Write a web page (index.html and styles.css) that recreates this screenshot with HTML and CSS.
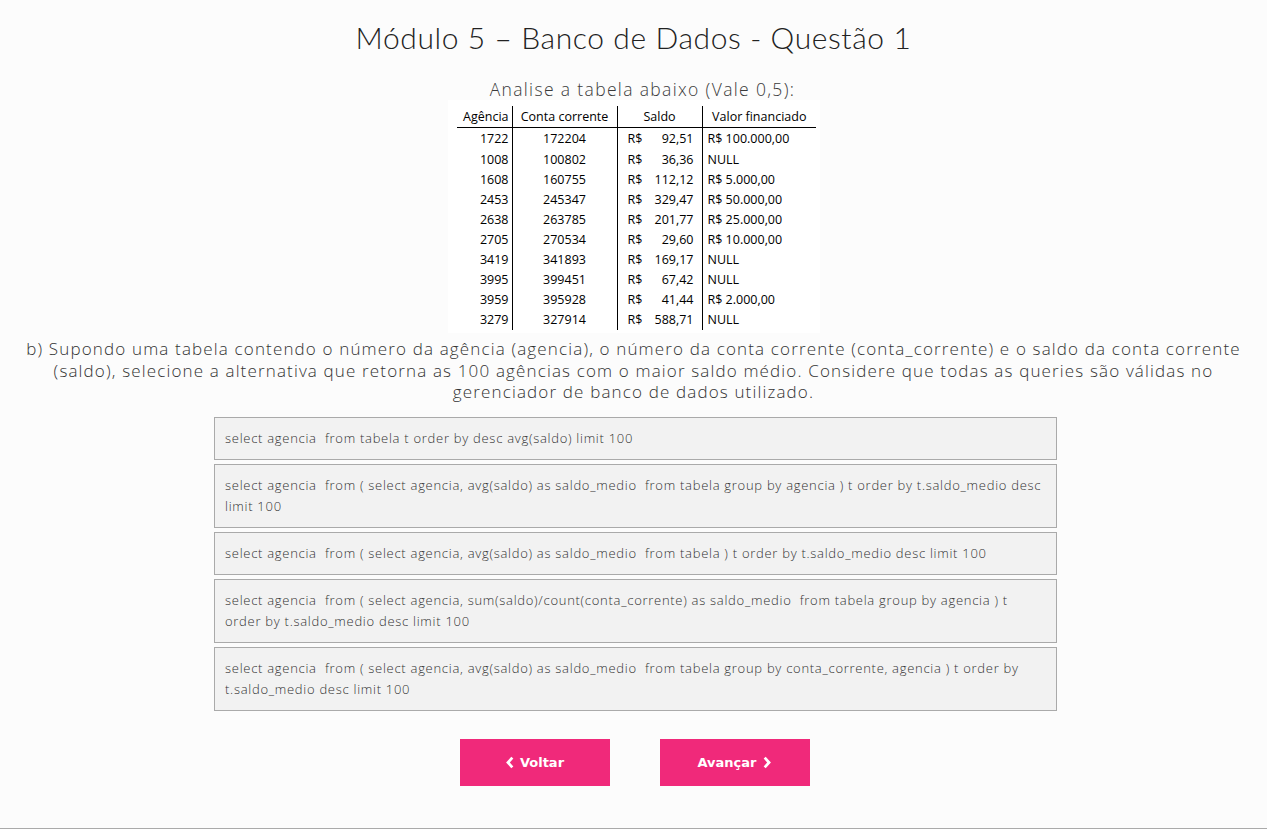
FILE: index.html
```html
<!DOCTYPE html>
<html lang="pt">
<head>
<meta charset="utf-8">
<title>Módulo 5 – Banco de Dados - Questão 1</title>
<link rel="stylesheet" href="styles.css">
</head>
<body>
<div class="page">
  <h1 class="title">Módulo 5 – Banco de Dados - Questão 1</h1>
  <p class="caption">Analise a tabela abaixo (Vale 0,5):</p>
  <div class="figure">
    <table class="data">
      <colgroup><col class="w1"><col class="w2"><col class="w3"><col class="w4"></colgroup>
      <thead>
        <tr><th class="c1">Agência</th><th class="c2">Conta corrente</th><th class="c3">Saldo</th><th class="c4">Valor financiado</th></tr>
      </thead>
      <tbody>
        <tr><td class="c1">1722</td><td class="c2">172204</td><td class="c3"><span>R$</span><span>92,51</span></td><td class="c4">R$ 100.000,00</td></tr>
        <tr><td class="c1">1008</td><td class="c2">100802</td><td class="c3"><span>R$</span><span>36,36</span></td><td class="c4">NULL</td></tr>
        <tr><td class="c1">1608</td><td class="c2">160755</td><td class="c3"><span>R$</span><span>112,12</span></td><td class="c4">R$ 5.000,00</td></tr>
        <tr><td class="c1">2453</td><td class="c2">245347</td><td class="c3"><span>R$</span><span>329,47</span></td><td class="c4">R$ 50.000,00</td></tr>
        <tr><td class="c1">2638</td><td class="c2">263785</td><td class="c3"><span>R$</span><span>201,77</span></td><td class="c4">R$ 25.000,00</td></tr>
        <tr><td class="c1">2705</td><td class="c2">270534</td><td class="c3"><span>R$</span><span>29,60</span></td><td class="c4">R$ 10.000,00</td></tr>
        <tr><td class="c1">3419</td><td class="c2">341893</td><td class="c3"><span>R$</span><span>169,17</span></td><td class="c4">NULL</td></tr>
        <tr><td class="c1">3995</td><td class="c2">399451</td><td class="c3"><span>R$</span><span>67,42</span></td><td class="c4">NULL</td></tr>
        <tr><td class="c1">3959</td><td class="c2">395928</td><td class="c3"><span>R$</span><span>41,44</span></td><td class="c4">R$ 2.000,00</td></tr>
        <tr><td class="c1">3279</td><td class="c2">327914</td><td class="c3"><span>R$</span><span>588,71</span></td><td class="c4">NULL</td></tr>
      </tbody>
    </table>
  </div>
  <p class="question">b) Supondo uma tabela contendo o número da agência (agencia), o número da conta corrente (conta_corrente) e o saldo da conta corrente (saldo), selecione a alternativa que retorna as 100 agências com o maior saldo médio. Considere que todas as queries são válidas no gerenciador de banco de dados utilizado.</p>
  <div class="options">
    <div class="option">select agencia&nbsp; from tabela t order by desc avg(saldo) limit 100</div>
    <div class="option">select agencia&nbsp; from ( select agencia, avg(saldo) as saldo_medio&nbsp; from tabela group by agencia ) t order by t.saldo_medio desc limit 100</div>
    <div class="option">select agencia&nbsp; from ( select agencia, avg(saldo) as saldo_medio&nbsp; from tabela ) t order by t.saldo_medio desc limit 100</div>
    <div class="option">select agencia&nbsp; from ( select agencia, sum(saldo)/count(conta_corrente) as saldo_medio&nbsp; from tabela group by agencia ) t order by t.saldo_medio desc limit 100</div>
    <div class="option">select agencia&nbsp; from ( select agencia, avg(saldo) as saldo_medio&nbsp; from tabela group by conta_corrente, agencia ) t order by t.saldo_medio desc limit 100</div>
  </div>
  <div class="nav">
    <a class="btn" href="#"><svg class="chev" viewBox="0 0 10 14" width="10" height="13"><path d="M7.5 1.8 L2.8 7 L7.5 12.2" fill="none" stroke="#fff" stroke-width="3"/></svg>Voltar</a>
    <a class="btn" href="#">Avançar<svg class="chev" viewBox="0 0 10 14" width="10" height="13"><path d="M2.5 1.8 L7.2 7 L2.5 12.2" fill="none" stroke="#fff" stroke-width="3"/></svg></a>
  </div>
</div>
<footer class="footer"></footer>
</body>
</html>
```

FILE: styles.css
```css
html, body {
  margin: 0;
  padding: 0;
}
body {
  background: #fcfcfc;
  font-family: "Open Sans", Lato, sans-serif;
  font-weight: 400;
  color: #333;
}
.page {
  display: flex;
  flex-direction: column;
  align-items: center;
  height: 828px;
}
.title {
  margin: 18px 0 0;
  font-family: Lato, sans-serif;
  font-size: 30px;
  font-weight: 300;
  color: #222;
  letter-spacing: 0.6px;
  line-height: 38px;
}
.caption {
  margin: 22px 0 0;
  padding-left: 18px;
  font-size: 17.5px;
  font-weight: 300;
  color: #3a3a3a;
  line-height: 22px;
  letter-spacing: 1.35px;
}
.figure {
  background: #fff;
  width: 366px;
  display: flex;
  justify-content: center;
  padding: 6px 0 3px 6px;
}
.data {
  border-collapse: collapse;
  table-layout: fixed;
  width: 359px;
  font-family: "Open Sans", "Liberation Sans", sans-serif;
  font-size: 12.5px;
  font-weight: 400;
  color: #000;
}
.w1 { width: 55px; }
.w2 { width: 105px; }
.w3 { width: 85px; }
.w4 { width: 114px; }
.data th, .data td {
  height: 20px;
  padding: 0;
  font-weight: 400;
  line-height: 20px;
  white-space: nowrap;
}
.data th {
  height: 21px;
  border-bottom: 1px solid #000;
  text-align: center;
}
.data tbody tr:first-child td { height: 22px; line-height: 22px; }
.data .c1 { border-right: 1px solid #000; text-align: right; padding-right: 3px; }
.data .c2 { border-right: 1px solid #000; text-align: center; }
.data .c3 { border-right: 1px solid #000; }
.data td.c3 { padding: 0 8px 0 10px; }
.data td.c3 span:first-child { float: left; }
.data td.c3 span:last-child { float: right; }
.data .c4 { text-align: left; padding-left: 5px; }
.data th.c4 { text-align: center; padding-left: 0; }
.question {
  margin: 5px 0 0;
  width: 1225px;
  text-align: center;
  font-size: 17px;
  font-weight: 300;
  line-height: 21.5px;
  color: #333;
  letter-spacing: 1.15px;
}
.options {
  margin: 14px 0 0 4px;
  width: 843px;
  display: flex;
  flex-direction: column;
  gap: 4px;
}
.option {
  background: #f2f2f2;
  border: 1px solid #aaa;
  padding: 10px 10px;
  font-size: 13px;
  font-weight: 300;
  line-height: 21px;
  color: #333;
  letter-spacing: 0.72px;
}
.nav {
  margin: 28px 0 0 2px;
  display: flex;
  gap: 50px;
}
.btn {
  width: 150px;
  height: 47px;
  background: #f0297a;
  color: #fff;
  text-decoration: none;
  display: flex;
  align-items: center;
  justify-content: center;
  gap: 5px;
  font-family: "DejaVu Sans", Verdana, sans-serif;
  font-size: 13px;
  font-weight: 700;
}
.footer {
  border-top: 1px solid #aaa;
  height: 8px;
  background: #fff;
}
```
